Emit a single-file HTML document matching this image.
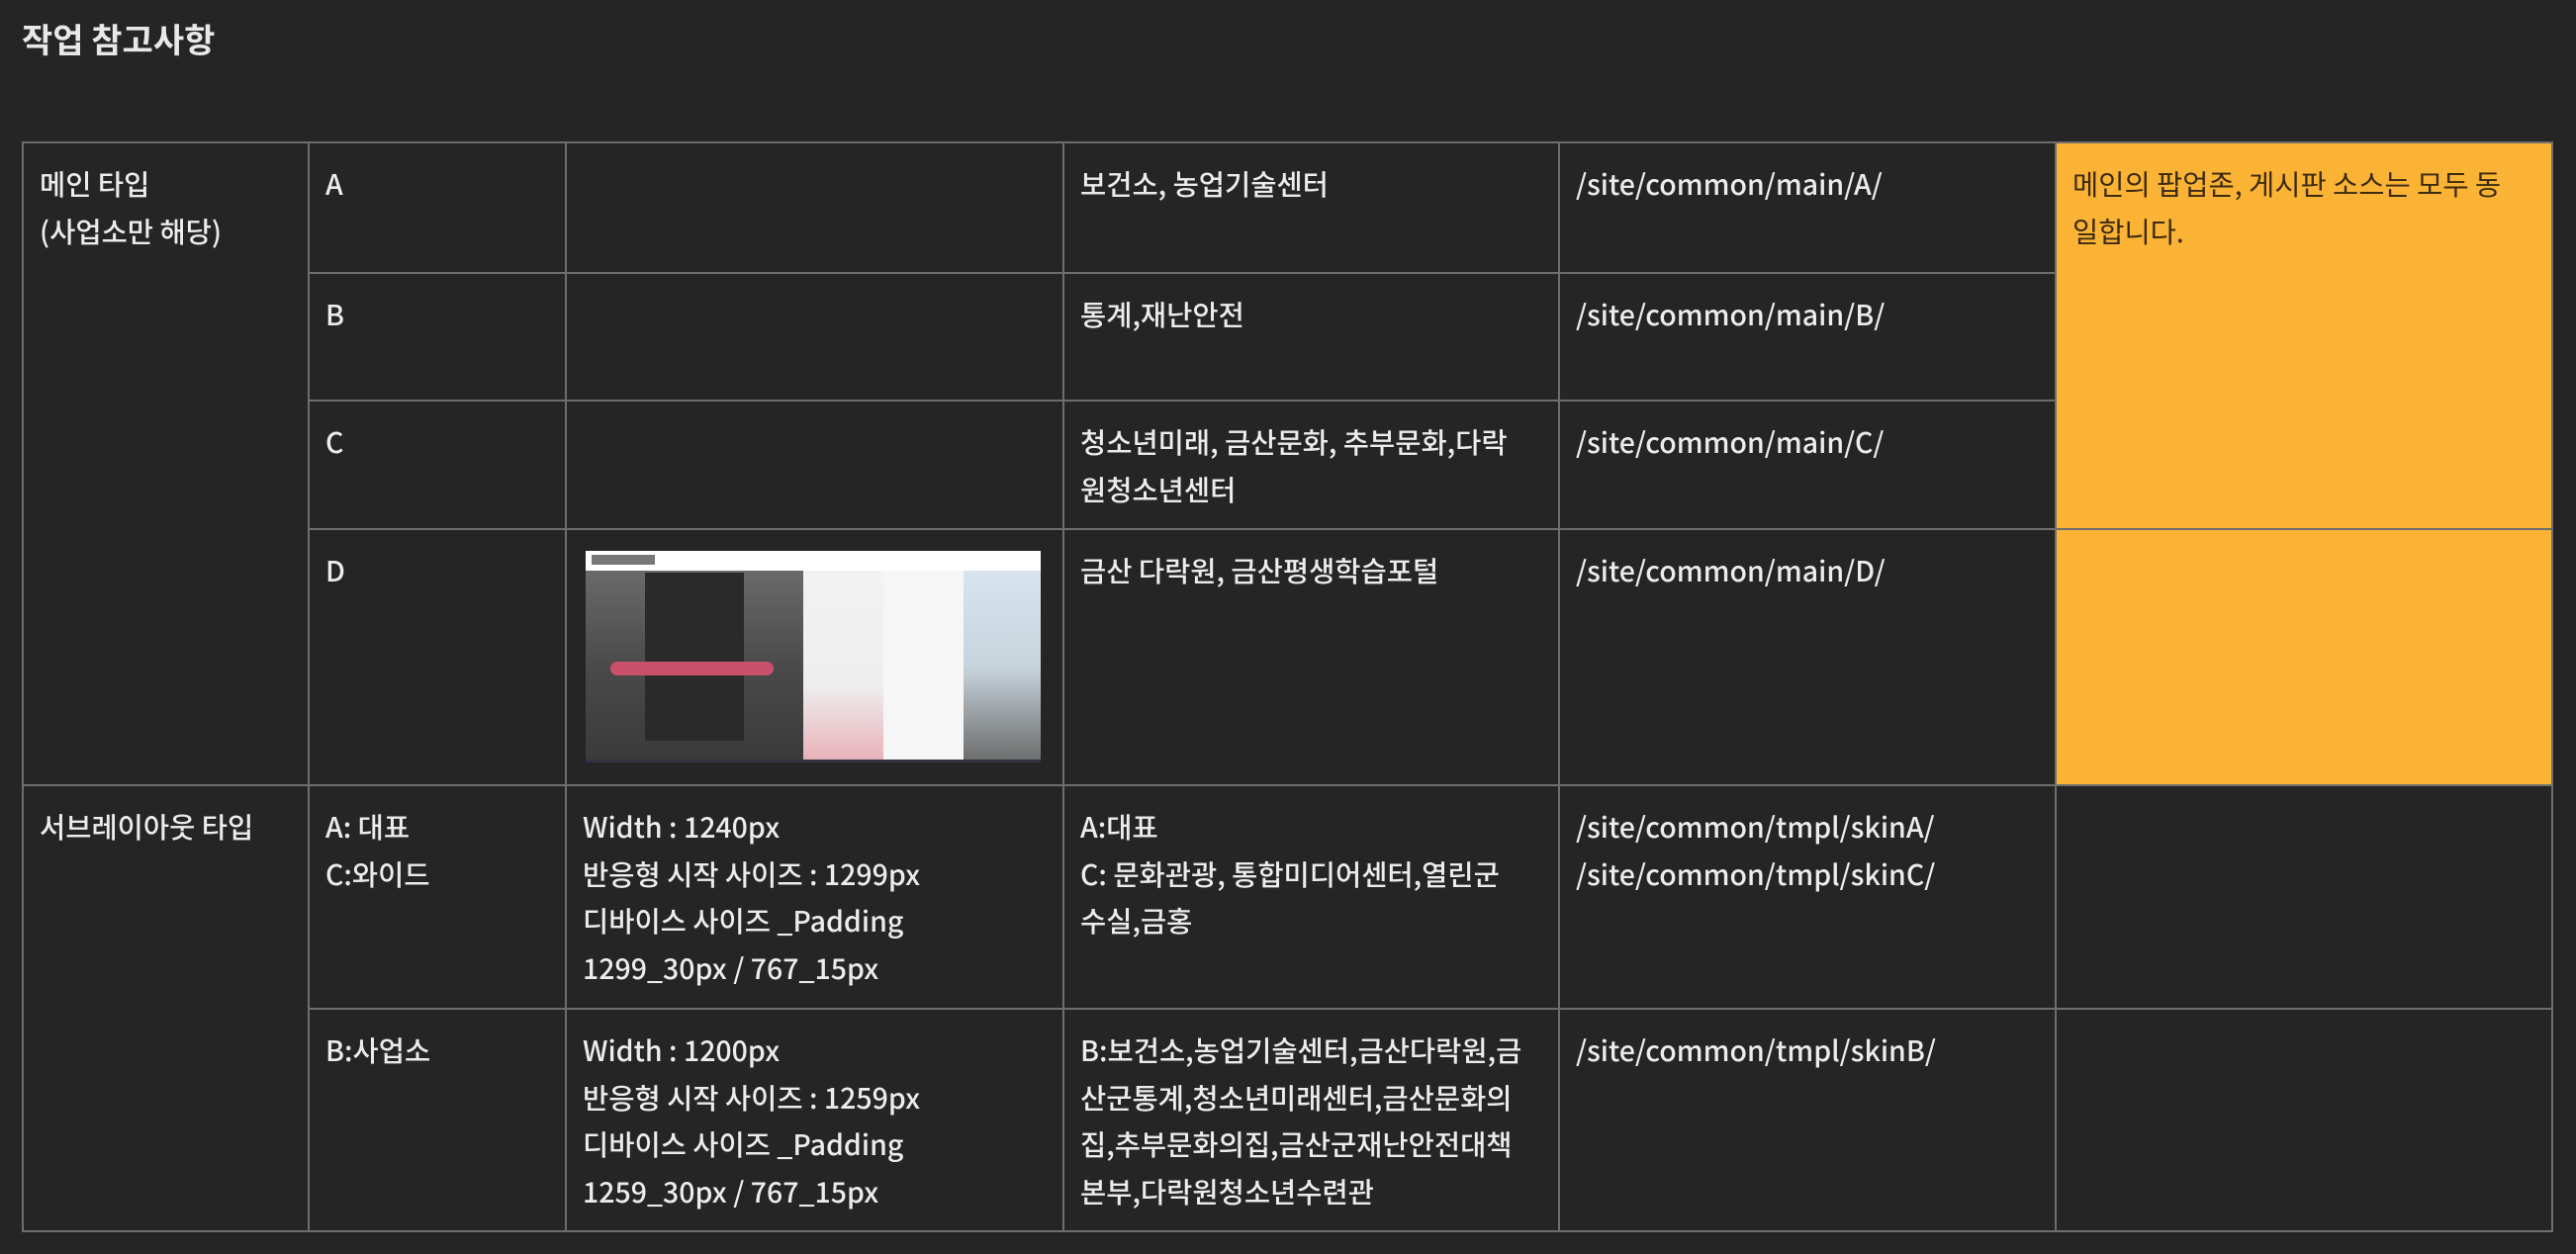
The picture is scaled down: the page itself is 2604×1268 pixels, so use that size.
<!DOCTYPE html>
<html><head><meta charset="utf-8"><style>
html,body{margin:0;padding:0;background:#252525;width:2604px;height:1268px;overflow:hidden}
body{font-family:"Liberation Sans","Noto Sans CJK KR",sans-serif;color:#ececec}
h1{position:absolute;left:22px;top:14px;margin:0;font-size:34px;font-weight:bold;color:#e8e8e8;font-family:"Noto Sans CJK KR",sans-serif}
table{position:absolute;left:22px;top:143px;border-collapse:collapse;table-layout:fixed;font-family:"Noto Sans CJK KR",sans-serif;font-size:28.5px;font-weight:500;line-height:47.5px}
td{border:2px solid #6e6e6e;vertical-align:top;padding:17px 16px 0 16px;box-sizing:border-box;overflow:hidden;white-space:nowrap}
.o{background:#fbb335;color:#3a2a10;font-weight:400}
.img{position:relative;width:460px;height:214px;margin:3px 0 0 3px;background:#fff;overflow:hidden}
</style></head><body>
<h1>작업 참고사항</h1>
<table>
<colgroup><col style="width:289px"><col style="width:260px"><col style="width:503px"><col style="width:501px"><col style="width:502px"><col style="width:502px"></colgroup>
<tr style="height:132px"><td rowspan="4">메인 타입<br>(사업소만 해당)</td><td>A</td><td></td><td>보건소, 농업기술센터</td><td>/site/common/main/A/</td><td class="o" rowspan="3">메인의 팝업존, 게시판 소스는 모두 동<br>일합니다.</td></tr>
<tr style="height:129px"><td>B</td><td></td><td>통계,재난안전</td><td>/site/common/main/B/</td></tr>
<tr style="height:130px"><td>C</td><td></td><td>청소년미래, 금산문화, 추부문화,다락<br>원청소년센터</td><td>/site/common/main/C/</td></tr>
<tr style="height:259px"><td>D</td><td style="padding-top:0"><div class="img" style="margin-top:21px">
<div style="position:absolute;left:0;top:0;width:460px;height:20px;background:#fff"></div>
<div style="position:absolute;left:6px;top:4px;width:64px;height:10px;background:#777"></div>
<div style="position:absolute;left:0;top:20px;width:220px;height:194px;background:linear-gradient(180deg,#6a6a6a,#4a4a4a 50%,#3a3a3a)"></div>
<div style="position:absolute;left:60px;top:22px;width:100px;height:170px;background:#2a2a2a"></div>
<div style="position:absolute;left:25px;top:112px;width:165px;height:14px;border-radius:7px;background:#c8506a"></div>
<div style="position:absolute;left:220px;top:20px;width:81px;height:194px;background:linear-gradient(180deg,#f2f2f2,#eee 60%,#e8b0b8)"></div>
<div style="position:absolute;left:301px;top:20px;width:81px;height:194px;background:#f6f6f6"></div>
<div style="position:absolute;left:382px;top:20px;width:78px;height:194px;background:linear-gradient(180deg,#d8e4ee,#c8d4dc 50%,#6a6a6a)"></div>
<div style="position:absolute;left:0;top:211px;width:460px;height:3px;background:#334"></div>
</div></td><td>금산 다락원, 금산평생학습포털</td><td>/site/common/main/D/</td><td class="o" style="border-top-color:#f5c870"></td></tr>
<tr style="height:226px"><td rowspan="2">서브레이아웃 타입</td><td>A: 대표<br>C:와이드</td><td>Width : 1240px<br>반응형 시작 사이즈 : 1299px<br>디바이스 사이즈 _Padding<br>1299_30px / 767_15px</td><td>A:대표<br>C: 문화관광, 통합미디어센터,열린군<br>수실,금홍</td><td>/site/common/tmpl/skinA/<br>/site/common/tmpl/skinC/</td><td></td></tr>
<tr style="height:225px"><td>B:사업소</td><td>Width : 1200px<br>반응형 시작 사이즈 : 1259px<br>디바이스 사이즈 _Padding<br>1259_30px / 767_15px</td><td>B:보건소,농업기술센터,금산다락원,금<br>산군통계,청소년미래센터,금산문화의<br>집,추부문화의집,금산군재난안전대책<br>본부,다락원청소년수련관</td><td>/site/common/tmpl/skinB/</td><td></td></tr>
</table>
</body></html>
